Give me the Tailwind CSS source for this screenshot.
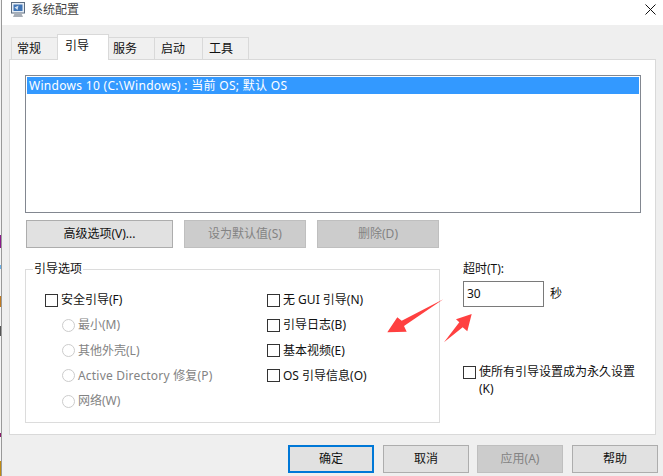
<!DOCTYPE html>
<html><head><meta charset="utf-8">
<script src="https://cdn.jsdelivr.net/npm/@tailwindcss/browser@4"></script>
</head>
<body class="m-0 w-[663px] h-[476px] overflow-hidden bg-white">
<div class="relative w-[663px] h-[476px] flex bg-white text-[12px] leading-[16px] text-[#111] font-['Noto_Sans','Noto_Sans_CJK_SC',sans-serif]">
  <div class="w-[2px] shrink-0 bg-[#f4f4f4] border-r border-[#999999]"></div>
  <div class="flex-1 flex flex-col min-w-0">
    <div class="h-[25px] shrink-0 bg-white flex items-start justify-between pl-[9px] pr-[7px]">
      <div class="flex items-center gap-[5px] pt-[2px]">
        <svg width="15" height="16" viewBox="0 0 15 16"><rect x="0.5" y="0.5" width="13" height="10.5" fill="#e6edf5" stroke="#5c6c80"/><rect x="2.5" y="2.5" width="9" height="6.5" fill="#3f74b5"/><path d="M3.5 5.5L7.5 3.5L6.5 8Z" fill="#cfe0f2"/><path d="M3.5 11.5L10.5 11.5L12 15L2 15Z" fill="#a7adb5"/></svg>
        <span class="text-[#444444]">系统配置</span>
      </div>
      <svg class="mt-[4px]" width="11" height="11" viewBox="0 0 11 11"><path d="M0.5 0.5L10.5 10.5M10.5 0.5L0.5 10.5" stroke="#111" stroke-width="1"/></svg>
    </div>
    <div class="flex-1 bg-[#efefef] flex flex-col pl-[7px] pr-[7px] min-h-0">
      <div class="h-[34px] flex items-end pl-[2px] shrink-0 relative z-10">
        <div class="h-[22px] w-[47px] -mr-px bg-[#f0f0f0] border border-b-0 border-[#d9d9d9] flex items-center pl-[5px]">常规</div>
        <div class="h-[26px] w-[52px] -mr-px bg-white border border-b-0 border-[#d9d9d9] flex items-center pl-[7px] relative z-10 -mb-px pb-[3px]">引导</div>
        <div class="h-[22px] w-[47px] -mr-px bg-[#f0f0f0] border border-b-0 border-[#d9d9d9] flex items-center pl-[4px]">服务</div>
        <div class="h-[22px] w-[49px] -mr-px bg-[#f0f0f0] border border-b-0 border-[#d9d9d9] flex items-center pl-[6px]">启动</div>
        <div class="h-[22px] w-[47px] bg-[#f0f0f0] border border-b-0 border-[#d9d9d9] flex items-center pl-[6px]">工具</div>
      </div>
      <div class="h-[376px] shrink-0 bg-white border border-[#d9d9d9] flex flex-col pl-[15px] pr-[14px] pt-[15px]">
        <div class="h-[138px] shrink-0 border border-[#828790] p-[1px] bg-white">
          <div class="h-[17px] bg-[#3399ff] text-white pl-[2px] flex items-center tracking-[0.3px]">Windows 10 (C:\Windows) : 当前 OS; 默认 OS</div>
        </div>
        <div class="flex gap-[11px] mt-[7px] ml-[1px] shrink-0">
          <button class="w-[147px] h-[28px] bg-[#e1e1e1] border border-[#adadad] text-[#111]">高级选项(V)...</button>
          <button class="w-[122px] h-[28px] bg-[#cccccc] border border-[#bfbfbf] text-[#838383]">设为默认值(S)</button>
          <button class="w-[122px] h-[28px] bg-[#cccccc] border border-[#bfbfbf] text-[#838383]">删除(D)</button>
        </div>
        <div class="flex mt-[21px] min-h-0">
          <div class="relative w-[415px] h-[154px] shrink-0 border border-[#dcdcdc] flex pt-[22px]">
            <span class="absolute left-[7px] top-[-9px] px-[1px] bg-white">引导选项</span>
            <div class="w-[241px] pl-[19px] flex flex-col shrink-0">
              <label class="flex items-center gap-[3px] h-[16px]"><span class="w-[13px] h-[13px] border border-[#333] bg-white"></span>安全引导(F)</label>
              <div class="flex flex-col pl-[17px] text-[#838383] gap-[9.3px] mt-[9.3px]">
                <label class="flex items-center gap-[3px] h-[16px]"><span class="w-[13px] h-[13px] rounded-full border border-[#cccccc] bg-white"></span>最小(M)</label>
                <label class="flex items-center gap-[3px] h-[16px]"><span class="w-[13px] h-[13px] rounded-full border border-[#cccccc] bg-white"></span>其他外壳(L)</label>
                <label class="flex items-center gap-[3px] h-[16px]"><span class="w-[13px] h-[13px] rounded-full border border-[#cccccc] bg-white"></span><span class="tracking-[0.2px]">Active Directory 修复(P)</span></label>
                <label class="flex items-center gap-[3px] h-[16px]"><span class="w-[13px] h-[13px] rounded-full border border-[#cccccc] bg-white"></span>网络(W)</label>
              </div>
            </div>
            <div class="flex flex-col gap-[9.3px]">
              <label class="flex items-center gap-[3px] h-[16px]"><span class="w-[13px] h-[13px] border border-[#333] bg-white"></span>无 GUI 引导(N)</label>
              <label class="flex items-center gap-[3px] h-[16px]"><span class="w-[13px] h-[13px] border border-[#333] bg-white"></span>引导日志(B)</label>
              <label class="flex items-center gap-[3px] h-[16px]"><span class="w-[13px] h-[13px] border border-[#333] bg-white"></span>基本视频(E)</label>
              <label class="flex items-center gap-[3px] h-[16px]"><span class="w-[13px] h-[13px] border border-[#333] bg-white"></span>OS 引导信息(O)</label>
            </div>
          </div>
          <div class="ml-[23px] flex flex-col flex-1 -mt-[8px]">
            <span>超时(T):</span>
            <div class="flex items-center gap-[6px] mt-[4px]">
              <div class="w-[81px] h-[26px] border border-[#7a7a7a] bg-white flex items-center pl-[3px]">30</div>
              <span>秒</span>
            </div>
            <label class="flex items-start gap-[3px] mt-[56px] leading-[17px]"><span class="w-[13px] h-[13px] mt-[3px] border border-[#333] bg-white shrink-0"></span><span>使所有引导设置成为永久设置<br>(K)</span></label>
          </div>
        </div>
      </div>
      <div class="flex justify-end gap-[9px] pt-[10px] -mr-[2px] shrink-0">
        <button class="w-[86px] h-[28px] bg-[#e1e1e1] border-2 border-[#0078d7] text-[#111]">确定</button>
        <button class="w-[86px] h-[28px] bg-[#e1e1e1] border border-[#adadad] text-[#111]">取消</button>
        <button class="w-[86px] h-[28px] -ml-px bg-[#cccccc] border border-[#bfbfbf] text-[#838383]">应用(A)</button>
        <button class="w-[86px] h-[28px] bg-[#e1e1e1] border border-[#adadad] text-[#111]">帮助</button>
      </div>
    </div>
  </div>
  <svg class="absolute left-0 top-0 pointer-events-none" width="663" height="476" viewBox="0 0 663 476">
    <path d="M443.3 299.3L401.7 320.7L397.3 317.3L387.3 332.3L406.7 331.7L404 326Z" fill="#ff4040"/>
    <path d="M444 342.3L459.3 322.3L456 319.3L471.7 314L467.3 331.3L462.7 327.3Z" fill="#ff4040"/>
    <rect x="0" y="235" width="1" height="13" fill="#8a1a8a"/>
    <rect x="0" y="265" width="1" height="4" fill="#6ab0e8"/>
    <rect x="0" y="296" width="1" height="11" fill="#c07a20"/>
    <rect x="0" y="326" width="1" height="10" fill="#555555"/>
    <rect x="0" y="433" width="1" height="4" fill="#8a1a6a"/>
    <rect x="0" y="461" width="1" height="15" fill="#c08a10"/>
  </svg>
</div>
</body></html>
